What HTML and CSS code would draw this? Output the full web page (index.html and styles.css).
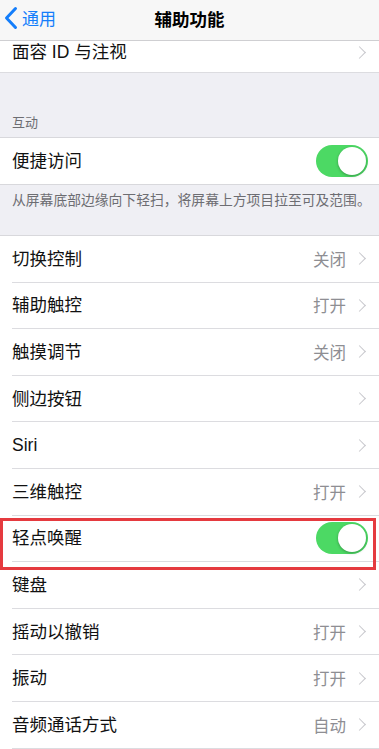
FILE: index.html
```html
<!DOCTYPE html>
<html lang="zh-CN">
<head>
<meta charset="utf-8">
<link rel="stylesheet" href="styles.css">
</head>
<body>
<div class="screen">
  <header class="nav">
    <div class="back">
      <svg class="back-chev" width="14" height="24" viewBox="0 0 14 24"><path d="M11.5 2.5 L2.5 12 L11.5 21.5" fill="none" stroke="#147efb" stroke-width="3" stroke-linecap="round" stroke-linejoin="round"/></svg>
      <span>通用</span>
    </div>
    <div class="title">辅助功能</div>
  </header>

  <div class="group">
    <div class="row row-cut last">
      <div class="inner"><span class="label">面容 ID 与注视</span><span class="chev"></span></div>
    </div>
  </div>

  <div class="sec-head">互动</div>
  <div class="group bordered">
    <div class="row last tall">
      <div class="inner"><span class="label">便捷访问</span><span class="toggle"><span class="knob"></span></span></div>
    </div>
  </div>
  <div class="sec-foot">从屏幕底部边缘向下轻扫，将屏幕上方项目拉至可及范围。</div>

  <div class="group bordered">
    <div class="row"><div class="inner"><span class="label">切换控制</span><span class="value">关闭</span><span class="chev"></span></div></div>
    <div class="row"><div class="inner"><span class="label">辅助触控</span><span class="value">打开</span><span class="chev"></span></div></div>
    <div class="row"><div class="inner"><span class="label">触摸调节</span><span class="value">关闭</span><span class="chev"></span></div></div>
    <div class="row"><div class="inner"><span class="label">侧边按钮</span><span class="chev"></span></div></div>
    <div class="row"><div class="inner"><span class="label">Siri</span><span class="chev"></span></div></div>
    <div class="row"><div class="inner"><span class="label">三维触控</span><span class="value">打开</span><span class="chev"></span></div></div>
    <div class="row highlight"><div class="inner"><span class="label">轻点唤醒</span><span class="toggle"><span class="knob"></span></span></div><div class="redbox"></div></div>
    <div class="row"><div class="inner"><span class="label">键盘</span><span class="chev"></span></div></div>
    <div class="row"><div class="inner"><span class="label">摇动以撤销</span><span class="value">打开</span><span class="chev"></span></div></div>
    <div class="row"><div class="inner"><span class="label">振动</span><span class="value">打开</span><span class="chev"></span></div></div>
    <div class="row"><div class="inner"><span class="label">音频通话方式</span><span class="value">自动</span><span class="chev"></span></div></div>
  </div>
</div>
</body>
</html>
```

FILE: styles.css
```css
* { box-sizing: border-box; }
html, body { margin: 0; padding: 0; }
body {
  width: 379px;
  height: 749px;
  overflow: hidden;
  background: #efeff4;
  font-family: "Liberation Sans", "Noto Sans CJK SC", sans-serif;
  color: #000;
}
.screen { width: 379px; }

.nav {
  height: 41px;
  background: #f7f7f7;
  border-bottom: 1px solid #cfcfd2;
  display: flex;
  align-items: center;
  justify-content: center;
  position: relative;
}
.back {
  position: absolute;
  left: 4px;
  top: 5px;
  display: flex;
  align-items: center;
  gap: 4px;
  color: #147efb;
  font-size: 17px;
}
.back-chev { display: block; }
.title {
  font-size: 17.5px;
  font-weight: bold;
  margin-top: -4px;
}

.group { background: #fff; }
.group.bordered {
  border-top: 1px solid #d8d8dc;
  border-bottom: 1px solid #d8d8dc;
}

.row {
  position: relative;
  padding-left: 12px;
  height: 46.6px;
}
.row.tall { height: 46px; }
.inner {
  height: 100%;
  display: flex;
  align-items: center;
  padding-right: 11px;
  border-bottom: 1px solid #dcdce0;
}
.row.last .inner { border-bottom: none; }
.row-cut { height: 32px; border-bottom: 1px solid #dcdce0; }
.row-cut .inner { padding-bottom: 9px; }

.label {
  flex: 1;
  font-size: 17.5px;
  line-height: 22px;
  color: #111;
}
.value {
  font-size: 16.5px;
  color: #8e8e93;
  margin-right: 9px;
}
.chev {
  width: 9px;
  height: 9px;
  border-top: 1.5px solid #c7c7cc;
  border-right: 1.5px solid #c7c7cc;
  transform: rotate(45deg);
  margin-right: 4px;
}

.toggle {
  width: 52px;
  height: 32px;
  border-radius: 16px;
  background: #4cd964;
  position: relative;
  display: block;
}
.knob {
  position: absolute;
  right: 2px;
  top: 2px;
  width: 28px;
  height: 28px;
  border-radius: 50%;
  background: #fff;
  box-shadow: 0 1px 3px rgba(0,0,0,0.3);
}

.sec-head {
  height: 64px;
  padding: 41px 12px 0;
  font-size: 13px;
  line-height: 18px;
  color: #6d6d72;
}
.sec-foot {
  height: 50px;
  padding: 7px 12px 0;
  font-size: 13.8px;
  line-height: 18px;
  color: #6d6d72;
  white-space: nowrap;
}

.redbox {
  position: absolute;
  left: 0;
  top: 2.4px;
  width: 376px;
  height: 52px;
  border: 3px solid #e53a3f;
  pointer-events: none;
}
```
